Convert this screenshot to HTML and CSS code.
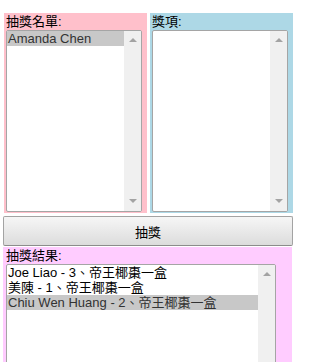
FILE: index.html
```html
<!DOCTYPE html>
<html lang="zh-Hant">
  <head>
    <meta charset="UTF-8" />
    <title>抽獎</title>
    <link rel="stylesheet" href="styles.css">
  </head>
  <body>
    <div class="page">
      <div class="top">
        <div class="panel names">
          <div class="label">抽獎名單:</div>
          <div class="listbox tall">
            <ul class="options">
              <li class="selected">Amanda Chen</li>
            </ul>
            <div class="scrollbar">
              <span class="arrow up"></span>
              <span class="arrow down"></span>
            </div>
          </div>
        </div>

        <div class="panel prizes">
          <div class="label">獎項:</div>
          <div class="listbox tall">
            <ul class="options"></ul>
            <div class="scrollbar">
              <span class="arrow up"></span>
              <span class="arrow down"></span>
            </div>
          </div>
        </div>
      </div>

      <button class="draw">抽獎</button>

      <div class="panel results">
        <div class="label">抽獎結果:</div>
        <div class="listbox wide">
          <ul class="options">
            <li>Joe Liao - 3、帝王椰棗一盒</li>
            <li>美陳 - 1、帝王椰棗一盒</li>
            <li class="selected">Chiu Wen Huang - 2、帝王椰棗一盒</li>
          </ul>
          <div class="scrollbar">
            <span class="arrow up"></span>
            <span class="arrow down"></span>
          </div>
        </div>
      </div>
    </div>
  </body>
</html>
```

FILE: styles.css
```css
body {
  margin: 0;
  font-family: "Liberation Sans", Arial, "Noto Sans CJK TC", sans-serif;
  font-size: 13px;
  color: #000;
  background-color: #fff;
}
.page {
  padding: 13px 0 0 3px;
  width: 290px;
}
.top {
  display: flex;
  gap: 3px;
  padding-left: 1px;
}
.panel {
  box-sizing: border-box;
  padding: 1px 5px 1px 2px;
}
.names {
  width: 143px;
  background-color: #ffc0cb;
}
.prizes {
  width: 143px;
  background-color: #add8e6;
}
/* the results box runs on below the window, so clip it at the edge */
.results {
  width: 289px;
  height: 115px;
  margin-top: 1px;
  padding: 1px 16px 0 3px;
  overflow: hidden;
  background-color: #ffccff;
}
.label {
  line-height: 16px;
  height: 16px;
}
.listbox {
  box-sizing: border-box;
  display: flex;
  background-color: #fff;
  border: 1px solid #a5a5a5;
  border-radius: 2px;
  overflow: hidden;
}
.tall {
  width: 136px;
  height: 182px;
}
.wide {
  width: 270px;
  height: 120px;
}
.options {
  flex: 1;
  list-style: none;
  margin: 0;
  padding: 0;
}
.options li {
  line-height: 15px;
  height: 15px;
  padding-left: 1px;
  white-space: nowrap;
  overflow: hidden;
}
.options li.selected {
  background-color: #c8c8c8;
  color: #333;
}
.scrollbar {
  position: relative;
  width: 17px;
  background-color: #f0f0f0;
}
.arrow {
  position: absolute;
  left: 5px;
  width: 0;
  height: 0;
  border-left: 4px solid transparent;
  border-right: 4px solid transparent;
}
.arrow.up {
  top: 7px;
  border-bottom: 4px solid #a3a3a3;
}
.arrow.down {
  bottom: 8px;
  border-top: 4px solid #a3a3a3;
}
.draw {
  display: block;
  box-sizing: border-box;
  width: 290px;
  height: 30px;
  margin-top: 3px;
  padding: 0;
  font-family: inherit;
  font-size: 13px;
  color: #000;
  background: linear-gradient(#f6f6f6, #dcdcdc);
  border: 1px solid #a3a3a3;
  border-bottom-color: #8c8c8c;
  border-radius: 2px;
}
```
